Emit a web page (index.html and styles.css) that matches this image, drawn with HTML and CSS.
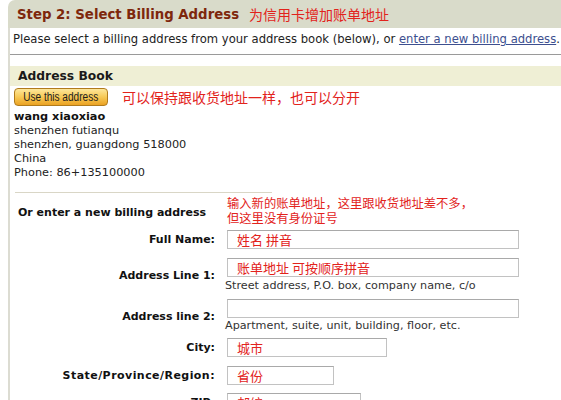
FILE: index.html
```html
<!DOCTYPE html>
<html lang="en">
<head>
<meta charset="utf-8">
<title>Select Billing Address</title>
<link rel="stylesheet" href="styles.css">
</head>
<body>
<div class="page">
  <div class="step-head">
    <span class="step-title">Step 2: Select Billing Address</span>
    <span class="note note-lg">为信用卡增加账单地址</span>
  </div>
  <div class="content">
    <p class="intro">Please select a billing address from your address book (below), or <a href="#" class="link">enter a new billing address</a>.</p>
    <div class="book-head">Address Book</div>
    <div class="use-row">
      <button class="use-btn" type="button"><span class="use-btn-text">Use this address</span></button>
      <span class="note note-lg">可以保持跟收货地址一样，也可以分开</span>
    </div>
    <div class="addr">
      <div class="addr-name">wang xiaoxiao</div>
      <div>shenzhen futianqu</div>
      <div>shenzhen, guangdong 518000</div>
      <div>China</div>
      <div>Phone: 86+135100000</div>
    </div>
    <div class="sep"></div>
    <div class="form">
      <div class="row row-title">
        <div class="form-title">Or enter a new billing address</div>
        <div class="note note-sm">输入新的账单地址，这里跟收货地址差不多，<br>但这里没有身份证号</div>
      </div>
      <div class="row row-name">
        <label class="lbl">Full Name:</label>
        <div class="fcol"><input class="inp inp-long" value="姓名 拼音"></div>
      </div>
      <div class="row row-a1">
        <label class="lbl">Address Line 1:</label>
        <div class="fcol"><input class="inp inp-long" value="账单地址 可按顺序拼音"><div class="hint hint-a1">Street address, P.O. box, company name, c/o</div></div>
      </div>
      <div class="row row-a2">
        <label class="lbl">Address line 2:</label>
        <div class="fcol"><input class="inp inp-long" value=""><div class="hint hint-a2">Apartment, suite, unit, building, floor, etc.</div></div>
      </div>
      <div class="row row-city">
        <label class="lbl">City:</label>
        <div class="fcol"><input class="inp inp-city" value="城市"></div>
      </div>
      <div class="row row-state">
        <label class="lbl lbl-wide">State/Province/Region:</label>
        <div class="fcol"><input class="inp inp-state" value="省份"></div>
      </div>
      <div class="row row-zip">
        <label class="lbl">ZIP:</label>
        <div class="fcol"><input class="inp inp-zip" value="邮编"></div>
      </div>
    </div>
  </div>
</div>
</body>
</html>
```

FILE: styles.css
```css
html, body {
  margin: 0;
  padding: 0;
  background: #ffffff;
}
body {
  font-family: "DejaVu Sans", Verdana, sans-serif;
  font-size: 11.3px;
  color: #222222;
  overflow: hidden;
}
.page {
  margin-left: 8px;
}
.step-head {
  height: 28px;
  background: #d9dbca;
  border-top-left-radius: 7px;
  display: flex;
  align-items: center;
  padding-left: 9px;
  gap: 10px;
}
.step-title {
  font-weight: bold;
  font-size: 13.3px;
  color: #7e270c;
}
.note {
  font-family: "Noto Sans CJK SC", sans-serif;
  color: #e2231c;
}
.note-lg {
  font-size: 14px;
}
.note-sm {
  font-size: 12.3px;
  line-height: 15px;
}
.content {
  border-left: 2px solid #dcdcd2;
}
.intro {
  margin: 0;
  padding: 4px 0 8px 3px;
  font-size: 11.6px;
  line-height: 14px;
  border-bottom: 1px solid #9a9a9a;
}
.link {
  color: #3d4f8f;
  text-decoration: underline;
}
.book-head {
  margin-top: 11px;
  height: 20px;
  line-height: 20px;
  background: #efefd5;
  padding-left: 8px;
  font-weight: bold;
  font-size: 12.3px;
  color: #1a1a1a;
}
.use-row {
  margin-top: 1px;
  padding-left: 4px;
  display: flex;
  align-items: center;
  gap: 14px;
}
.use-btn {
  width: 94px;
  height: 18px;
  padding: 0;
  border: 1px solid #b07b1c;
  border-radius: 4px;
  background: linear-gradient(#fde79b, #f7c956 50%, #eba223);
  display: flex;
  align-items: center;
  justify-content: center;
  overflow: hidden;
}
.use-btn-text {
  font-family: "Liberation Sans", Arial, sans-serif;
  font-size: 12px;
  color: #1e1e1e;
  display: inline-block;
  transform: scaleX(0.84);
  white-space: nowrap;
}
.addr {
  margin-top: 3px;
  padding-left: 4px;
  line-height: 14px;
}
.addr-name {
  font-weight: bold;
  font-size: 11.3px;
  color: #111111;
}
.sep {
  margin-top: 12px;
  margin-left: 5px;
  width: 257px;
  border-top: 1px solid #d9d6c6;
}
.form {
  display: flex;
  flex-direction: column;
}
.row {
  display: flex;
  align-items: center;
}
.row-title {
  margin-top: 3px;
}
.form-title {
  width: 208px;
  flex: none;
  padding-left: 8px;
  box-sizing: border-box;
  padding-top: 2px;
  font-weight: bold;
  font-size: 11px;
  color: #111111;
  white-space: nowrap;
}
.form-title + .note {
  margin-left: 9px;
}
.lbl {
  width: 205px;
  text-align: right;
  font-weight: bold;
  font-size: 11px;
  color: #111111;
  flex: none;
}
.lbl-wide {
  letter-spacing: 0.45px;
}
.fcol {
  margin-left: 12px;
  display: flex;
  flex-direction: column;
}
.inp {
  box-sizing: border-box;
  height: 19px;
  margin: 0;
  padding: 0 0 0 9px;
  border: 1px solid #c2c2c2;
  border-top-color: #a9a9a9;
  font-family: "Noto Sans CJK SC", sans-serif;
  font-size: 13px;
  color: #e2231c;
  background: #ffffff;
  outline: none;
}
.inp-long { width: 292px; }
.inp-city { width: 160px; }
.inp-state { width: 107px; }
.inp-zip { width: 134px; }
.hint {
  font-size: 11.2px;
  line-height: 14px;
  color: #333333;
  margin-left: -2px;
}
.hint-a1 { margin-top: 2px; }
.hint-a2 { margin-top: 1px; }
.row-name { margin-top: 4px; }
.row-a1 { margin-top: 9px; }
.row-a2 { margin-top: 6px; }
.row-city { margin-top: 5px; }
.row-state { margin-top: 9px; }
.row-zip { margin-top: 8px; }
```
